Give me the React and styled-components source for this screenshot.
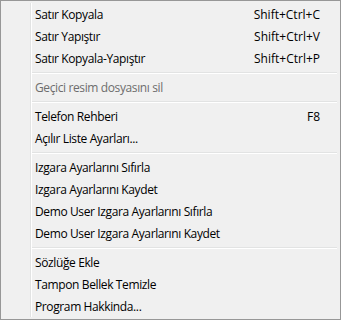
import React from "react";
import styled, { createGlobalStyle } from "styled-components";

const GlobalStyle = createGlobalStyle`
    body {
        margin: 0;
        background: #ffffff;
    }
`;

const Menu = styled.div`
    width: 341px;
    height: 320px;
    box-sizing: border-box;
    border: 1px solid #979797;
    background: #f0f0f0;
    padding: 2px;
    font-family: "Open Sans", "Liberation Sans", sans-serif;
    font-size: 12px;
    color: #000000;
`;

const List = styled.ul`
    list-style: none;
    margin: 0;
    padding: 0;
    height: 100%;
    background: linear-gradient(
        to right,
        transparent 27px,
        #e2e3e3 27px,
        #e2e3e3 28px,
        #ffffff 28px,
        #ffffff 29px,
        transparent 29px
    );
`;

const Item = styled.li`
    height: 22px;
    display: grid;
    grid-template-columns: 1fr auto;
    align-items: center;
    padding: 0 18px 0 32px;
    color: ${props => (props.disabled ? "#6d6d6d" : "#000000")};
    white-space: nowrap;
    cursor: default;
`;

const Label = styled.span`
    letter-spacing: -0.38px;
`;

const Shortcut = styled.span`
    text-align: right;
`;

const Separator = styled.li`
    height: 7px;
    display: flex;
    align-items: center;
    margin: 0 1px 0 29px;

    &::before {
        content: "";
        flex: 1;
        height: 1px;
        border-bottom: 1px solid #ffffff;
        background: #e2e3e3;
    }
`;

const groups = [
    [
        { label: "Satır Kopyala", key: "Shift+Ctrl+C" },
        { label: "Satır Yapıştır", key: "Shift+Ctrl+V" },
        { label: "Satır Kopyala-Yapıştır", key: "Shift+Ctrl+P" },
    ],
    [{ label: "Geçici resim dosyasını sil", disabled: true }],
    [
        { label: "Telefon Rehberi", key: "F8" },
        { label: "Açılır Liste Ayarları..." },
    ],
    [
        { label: "Izgara Ayarlarını Sıfırla" },
        { label: "Izgara Ayarlarını Kaydet" },
        { label: "Demo User Izgara Ayarlarını Sıfırla" },
        { label: "Demo User Izgara Ayarlarını Kaydet" },
    ],
    [
        { label: "Sözlüğe Ekle" },
        { label: "Tampon Bellek Temizle" },
        { label: "Program Hakkinda..." },
    ],
];

export default function App() {
    return (
        <>
            <GlobalStyle />
            <Menu>
                <List>
                    {groups.map((group, i) => (
                        <React.Fragment key={i}>
                            {i > 0 && <Separator />}
                            {group.map(item => (
                                <Item key={item.label} disabled={item.disabled}>
                                    <Label>{item.label}</Label>
                                    <Shortcut>{item.key}</Shortcut>
                                </Item>
                            ))}
                        </React.Fragment>
                    ))}
                </List>
            </Menu>
        </>
    );
}
